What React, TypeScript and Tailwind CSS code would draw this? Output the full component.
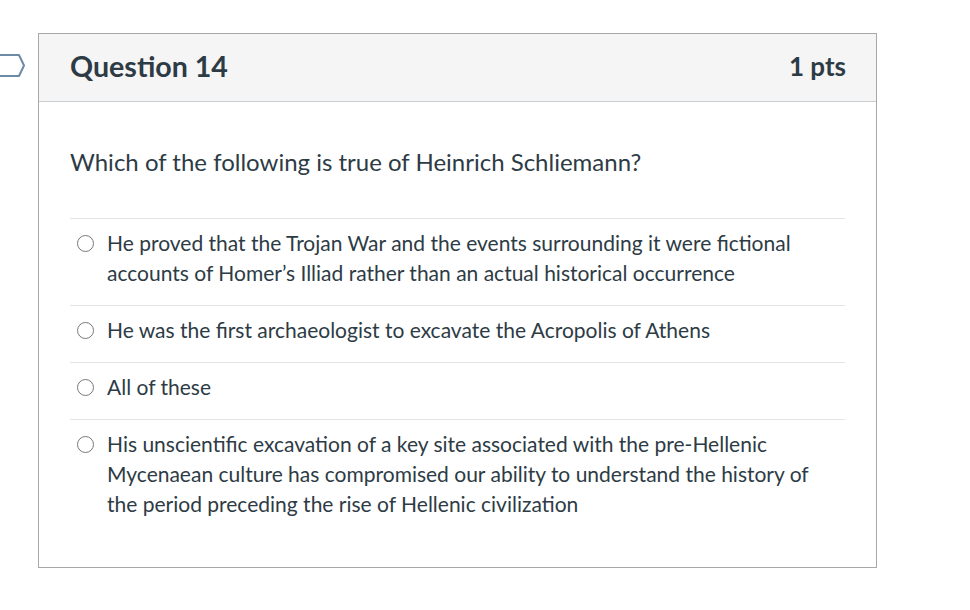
import React from 'react';

const answers = [
  'He proved that the Trojan War and the events surrounding it were fictional accounts of Homer\u2019s Illiad rather than an actual historical occurrence',
  'He was the first archaeologist to excavate the Acropolis of Athens',
  'All of these',
  'His unscientific excavation of a key site associated with the pre-Hellenic Mycenaean culture has compromised our ability to understand the history of the period preceding the rise of Hellenic civilization',
];

function Bookmark() {
  return (
    <svg width="26" height="26" viewBox="0 0 26 26" className="absolute left-0 top-[53px]">
      <path d="M-4 2 H19 L24 12.5 L19 23 H-4" fill="none" stroke="#6d8aa6" strokeWidth="2" strokeLinejoin="round" />
    </svg>
  );
}

export default function App() {
  return (
    <div
      className="relative min-h-[610px] bg-white text-[#2d3b45]"
      style={{ fontFamily: 'Lato, "Noto Sans", sans-serif' }}
    >
      <Bookmark />
      <div className="pl-[38px] pt-[33px]">
        <div className="h-[535px] w-[839px] border border-[#a8a8a8]">
          <div className="flex h-[68px] items-center justify-between border-b border-[#c7cdd1] bg-[#f5f5f5] pb-[3px] pl-[31px] pr-[30px]">
            <h2 className="text-[28.6px] font-bold leading-none">Question 14</h2>
            <span className="text-[26px] font-bold leading-none">1 pts</span>
          </div>
          <div className="px-[31px] pt-[45px]">
            <p className="text-[24px] leading-[30px]">Which of the following is true of Heinrich Schliemann?</p>
            <div className="mt-[41px]">
              {answers.map((a) => (
                <div key={a} className="flex gap-[13px] border-t border-[#e2e4e6] pb-[17px] pr-[30px] pt-[9px]">
                  <div className="flex h-[30px] w-[24px] shrink-0 items-center justify-end">
                    <span className="h-[17px] w-[17px] rounded-full border border-[#777]" />
                  </div>
                  <span className="text-[21px] leading-[30px]">{a}</span>
                </div>
              ))}
            </div>
          </div>
        </div>
      </div>
    </div>
  );
}
